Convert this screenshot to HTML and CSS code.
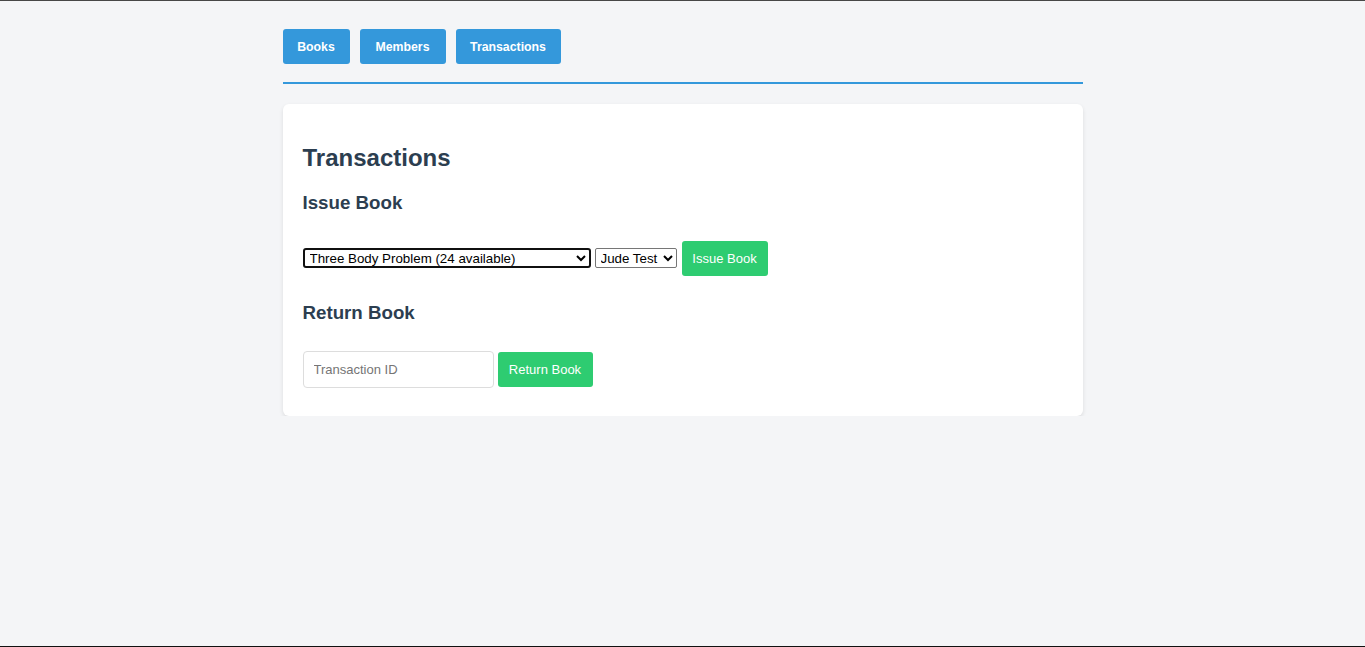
FILE: index.html
```html
<!DOCTYPE html>
<html lang="en">
<head>
<meta charset="utf-8">
<title>Library - Transactions</title>
<link rel="stylesheet" href="styles.css">
</head>
<body>
<div class="container">
  <nav class="nav">
    <button class="nav-btn nav-books">Books</button>
    <button class="nav-btn nav-members">Members</button>
    <button class="nav-btn nav-transactions">Transactions</button>
  </nav>
  <section class="card">
    <h2 class="title">Transactions</h2>
    <h3 class="subtitle">Issue Book</h3>
    <div class="row row-issue">
      <select class="select select-book is-focused">
        <option>Three Body Problem (24 available)</option>
      </select>
      <select class="select select-member">
        <option>Jude Test</option>
      </select>
      <button class="action-btn btn-issue">Issue Book</button>
    </div>
    <h3 class="subtitle">Return Book</h3>
    <div class="row row-return">
      <input class="text-input" type="text" placeholder="Transaction ID">
      <button class="action-btn btn-return">Return Book</button>
    </div>
  </section>
</div>
</body>
</html>
```

FILE: styles.css
```css
html {
  background: #f4f5f7;
  border-top: 1px solid #474747;
  border-bottom: 1px solid #111;
  min-height: 100vh;
  box-sizing: border-box;
}

body {
  margin: 0;
  font-family: "Liberation Sans", Arial, sans-serif;
  color: #2c3e50;
}

.container {
  width: 800px;
  margin: 0 auto;
}

.nav {
  display: flex;
  gap: 10px;
  padding: 28px 0 18px;
  border-bottom: 2px solid #3498db;
}

.nav-btn {
  box-sizing: border-box;
  height: 35px;
  padding: 0;
  border: none;
  border-radius: 3px;
  background: #3498db;
  color: #fff;
  font-family: "Liberation Sans", Arial, sans-serif;
  font-size: 12.3px;
  font-weight: bold;
  white-space: nowrap;
  text-align: center;
  cursor: pointer;
}

.nav-books {
  width: 67px;
}

.nav-members {
  width: 86px;
}

.nav-transactions {
  width: 105px;
}

.card {
  margin-top: 20px;
  background: #fff;
  border-radius: 6px;
  box-shadow: 0 2px 4px rgba(0, 0, 0, 0.1);
  padding: 20px;
}

.title {
  font-size: 24px;
  font-weight: bold;
  margin: 19.92px 0;
  color: #2c3e50;
}

.subtitle {
  font-size: 18.72px;
  font-weight: bold;
  margin: 18.72px 0;
  color: #2c3e50;
}

.row {
  display: flex;
  align-items: center;
}

.row-issue {
  padding: 8px 0 8px;
}

.row-return {
  padding: 8px 0 8px;
  gap: 4px;
}

.select {
  box-sizing: border-box;
  height: 20px;
  font-family: "Liberation Sans", Arial, sans-serif;
  font-size: 13.33px;
  color: #000;
  background: #fff;
  border: 1px solid #767676;
  border-radius: 2px;
  padding: 0 1px;
}

.select-book {
  width: 288px;
}

.select-member {
  width: 82px;
  margin-left: 4px;
}

.is-focused {
  border: 2px solid #101010;
  border-radius: 3px;
}

.action-btn {
  box-sizing: border-box;
  height: 35px;
  padding: 0;
  border: none;
  border-radius: 3px;
  background: #2ecc71;
  color: #fff;
  font-family: "Liberation Sans", Arial, sans-serif;
  font-size: 13px;
  white-space: nowrap;
  text-align: center;
  cursor: pointer;
}

.btn-issue {
  margin-left: 5px;
  width: 86px;
}

.btn-return {
  width: 95px;
}

.text-input {
  box-sizing: border-box;
  width: 191px;
  height: 37px;
  padding: 0 10px;
  border: 1px solid #ddd;
  border-radius: 4px;
  font-family: "Liberation Sans", Arial, sans-serif;
  font-size: 13px;
  color: #333;
}

.text-input::placeholder {
  color: #757575;
}
```
